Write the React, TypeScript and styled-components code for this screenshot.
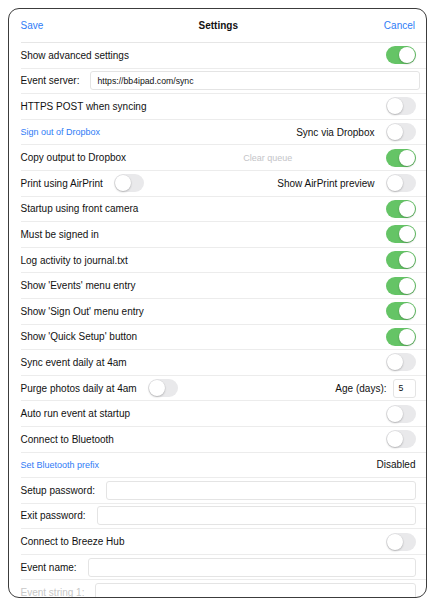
import React from "react";
import styled, { createGlobalStyle } from "styled-components";

const Global = createGlobalStyle`
  html, body { margin: 0; padding: 0; background: #fff; }
  body { font-family: "Liberation Sans", Arial, sans-serif; color: #111; }
`;

const Page = styled.div`
  padding: 8px 0 0 8px;
  width: 436px;
  height: 606px;
  box-sizing: border-box;
`;

const Frame = styled.div`
  width: 419px;
  height: 590px;
  box-sizing: border-box;
  border: 1.5px solid #3c3c3c;
  border-radius: 11px;
  overflow: hidden;
  background: #fff;
  display: flex;
  flex-direction: column;
`;

const Header = styled.div`
  height: 33px;
  margin-left: 11.5px;
  padding-right: 11px;
  border-bottom: 1px solid #e6e6e6;
  display: flex;
  align-items: center;
  justify-content: space-between;
  position: relative;
  flex-shrink: 0;
`;

const NavButton = styled.span`
  font-size: 10px;
  color: #2f7cf6;
`;

const Title = styled.span`
  position: absolute;
  left: 0;
  right: 0;
  text-align: center;
  font-size: 10px;
  font-weight: bold;
  pointer-events: none;
  padding-right: 10px;
`;

const Row = styled.div`
  height: 25.6px;
  box-sizing: border-box;
  margin-left: 11.5px;
  padding-right: 10.5px;
  border-bottom: 1px solid #ececec;
  display: flex;
  align-items: center;
  gap: 11px;
  flex-shrink: 0;
`;

const Label = styled.span<{ $faded?: boolean }>`
  font-size: 10px;
  color: ${(p) => (p.$faded ? "#c8c8c8" : "#111")};
  white-space: nowrap;
`;

const LinkText = styled.span`
  font-size: 9px;
  color: #2f7cf6;
  white-space: nowrap;
`;

const Hint = styled.span`
  font-size: 9px;
  color: #c4c4c8;
  white-space: nowrap;
`;

const Spacer = styled.div`
  flex: 1;
`;

const Center = styled.div`
  flex: 1;
  display: flex;
  justify-content: center;
  padding-left: 24px;
`;

const Field = styled.div<{ $extra?: number }>`
  flex: 1;
  height: 19px;
  box-sizing: border-box;
  border: 1px solid #e4e4e4;
  border-radius: 3px;
  display: flex;
  align-items: center;
  padding: 0 6px;
  font-size: 8.7px;
  color: #111;
  margin-right: ${(p) => (p.$extra ? -p.$extra : 0)}px;
`;

const SmallField = styled(Field)`
  flex: none;
  width: 23px;
  margin-left: -5px;
  padding: 0 5px;
`;

const Track = styled.div<{ $on: boolean }>`
  width: 30px;
  height: 18px;
  border-radius: 9px;
  background: ${(p) => (p.$on ? "#65c466" : "#e9e9eb")};
  position: relative;
  flex-shrink: 0;
`;

const Knob = styled.div<{ $on: boolean }>`
  position: absolute;
  top: 1px;
  left: ${(p) => (p.$on ? 13 : 1)}px;
  width: 16px;
  height: 16px;
  border-radius: 50%;
  background: #fff;
  box-shadow: 0 1px 2px rgba(0, 0, 0, 0.22), 0 0 0 0.5px rgba(0, 0, 0, 0.06);
`;

const Toggle = ({ on }: { on: boolean }) => (
  <Track $on={on}>
    <Knob $on={on} />
  </Track>
);

const ToggleRow = ({ label, on }: { label: string; on: boolean }) => (
  <Row>
    <Label>{label}</Label>
    <Spacer />
    <Toggle on={on} />
  </Row>
);

const FieldRow = ({
  label,
  value,
  extra,
  faded,
}: {
  label: string;
  value?: string;
  extra?: number;
  faded?: boolean;
}) => (
  <Row>
    <Label $faded={faded}>{label}</Label>
    <Field $extra={extra}>{value}</Field>
  </Row>
);

const App = () => (
  <>
    <Global />
    <Page>
      <Frame>
        <Header>
          <NavButton>Save</NavButton>
          <Title>Settings</Title>
          <NavButton>Cancel</NavButton>
        </Header>
        <ToggleRow label="Show advanced settings" on />
        <FieldRow label="Event server:" value="https://bb4ipad.com/sync" extra={4} />
        <ToggleRow label="HTTPS POST when syncing" on={false} />
        <Row>
          <LinkText>Sign out of Dropbox</LinkText>
          <Spacer />
          <Label>Sync via Dropbox</Label>
          <Toggle on={false} />
        </Row>
        <Row>
          <Label>Copy output to Dropbox</Label>
          <Center>
            <Hint>Clear queue</Hint>
          </Center>
          <Toggle on />
        </Row>
        <Row>
          <Label>Print using AirPrint</Label>
          <Toggle on={false} />
          <Spacer />
          <Label>Show AirPrint preview</Label>
          <Toggle on={false} />
        </Row>
        <ToggleRow label="Startup using front camera" on />
        <ToggleRow label="Must be signed in" on />
        <ToggleRow label="Log activity to journal.txt" on />
        <ToggleRow label="Show 'Events' menu entry" on />
        <ToggleRow label="Show 'Sign Out' menu entry" on />
        <ToggleRow label="Show 'Quick Setup' button" on />
        <ToggleRow label="Sync event daily at 4am" on={false} />
        <Row>
          <Label>Purge photos daily at 4am</Label>
          <Toggle on={false} />
          <Spacer />
          <Label>Age (days):</Label>
          <SmallField>5</SmallField>
        </Row>
        <ToggleRow label="Auto run event at startup" on={false} />
        <ToggleRow label="Connect to Bluetooth" on={false} />
        <Row>
          <LinkText>Set Bluetooth prefix</LinkText>
          <Spacer />
          <Label>Disabled</Label>
        </Row>
        <FieldRow label="Setup password:" />
        <FieldRow label="Exit password:" />
        <ToggleRow label="Connect to Breeze Hub" on={false} />
        <FieldRow label="Event name:" />
        <FieldRow label="Event string 1:" faded />
      </Frame>
    </Page>
  </>
);

export default App;
